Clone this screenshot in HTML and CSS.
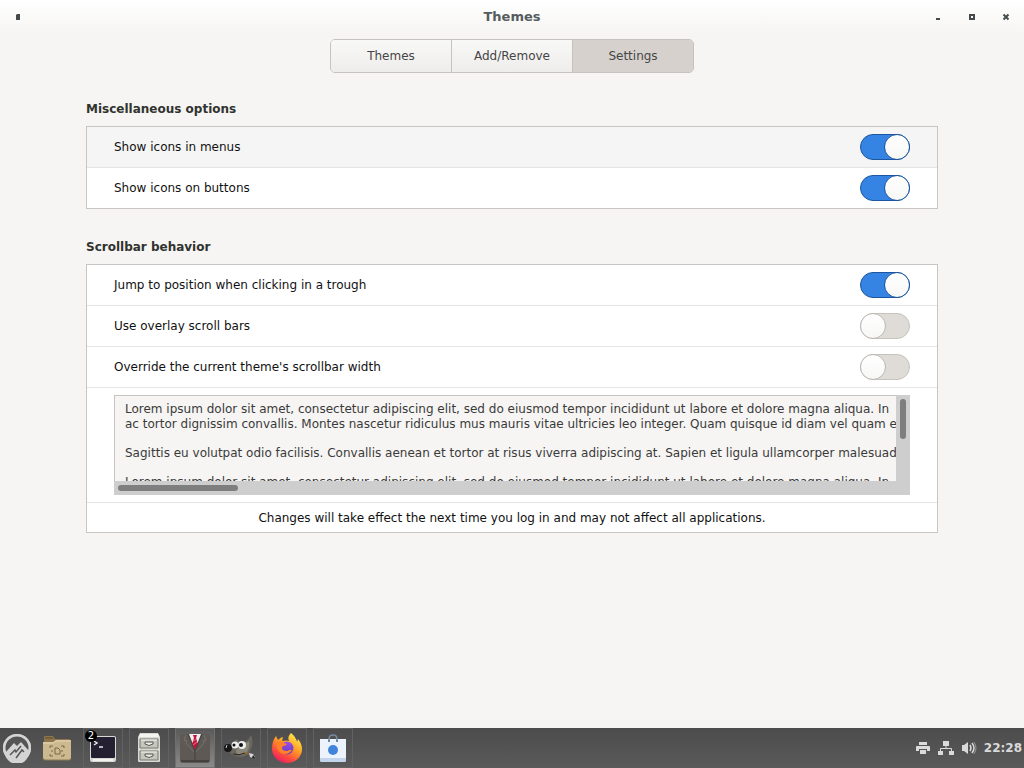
FILE: index.html
```html
<!DOCTYPE html>
<html lang="en">
<head>
<meta charset="utf-8">
<title>Themes</title>
<link rel="stylesheet" href="styles.css">
</head>
<body>
<div class="desktop">
  <header class="titlebar">
    <div class="titlebar-left">
      <button class="win-btn" type="button" aria-label="Pin window"><svg width="6" height="8" viewBox="0 0 6 8"><path d="M1 2l1-1h3v6H1z" fill="#454b4d"/></svg></button>
    </div>
    <h1 class="window-title">Themes</h1>
    <div class="titlebar-right">
      <button class="win-btn" type="button" aria-label="Minimize"><svg width="8" height="8" viewBox="0 0 8 8"><path d="M2 5h4v2H2z" fill="#454b4d"/></svg></button>
      <button class="win-btn" type="button" aria-label="Maximize"><svg width="8" height="8" viewBox="0 0 8 8"><path d="M2 2h4v4H2z" fill="none" stroke="#454b4d" stroke-width="2"/></svg></button>
      <button class="win-btn" type="button" aria-label="Close"><svg width="8" height="8" viewBox="0 0 8 8"><path d="M1.500 1.500l5 5M6.500 1.500l-5 5" stroke="#454b4d" stroke-width="2"/></svg></button>
    </div>
  </header>

  <nav class="tabs" aria-label="Pages">
    <button class="tab" type="button">Themes</button>
    <button class="tab" type="button">Add/Remove</button>
    <button class="tab tab-active" type="button" aria-current="page">Settings</button>
  </nav>

  <main class="content">
    <section class="group">
      <h2 class="group-title">Miscellaneous options</h2>
      <div class="frame">
        <label class="row row-hover"><span>Show icons in menus</span><input class="switch" type="checkbox" role="switch" checked></label>
        <label class="row"><span>Show icons on buttons</span><input class="switch" type="checkbox" role="switch" checked></label>
      </div>
    </section>
    <section class="group">
      <h2 class="group-title">Scrollbar behavior</h2>
      <div class="frame">
        <label class="row"><span>Jump to position when clicking in a trough</span><input class="switch" type="checkbox" role="switch" checked></label>
        <label class="row"><span>Use overlay scroll bars</span><input class="switch" type="checkbox" role="switch"></label>
        <label class="row"><span>Override the current theme's scrollbar width</span><input class="switch" type="checkbox" role="switch"></label>
        <div class="preview-row">
          <div class="preview">
            <div class="preview-text">
              <p>Lorem ipsum dolor sit amet, consectetur adipiscing elit, sed do eiusmod tempor incididunt ut labore et dolore magna aliqua. In<br>ac tortor dignissim convallis. Montes nascetur ridiculus mus mauris vitae ultricies leo integer. Quam quisque id diam vel quam e</p>
              <p>Sagittis eu volutpat odio facilisis. Convallis aenean et tortor at risus viverra adipiscing at. Sapien et ligula ullamcorper malesuada</p>
              <p>Lorem ipsum dolor sit amet, consectetur adipiscing elit, sed do eiusmod tempor incididunt ut labore et dolore magna aliqua. In</p>
            </div>
            <div class="bar bar-vertical"><div class="thumb thumb-vertical"></div></div>
            <div class="bar bar-horizontal"><div class="thumb thumb-horizontal"></div></div>
          </div>
        </div>
        <p class="note">Changes will take effect the next time you log in and may not affect all applications.</p>
      </div>
    </section>
  </main>

  <footer class="panel">
    <button class="launcher launcher-menu" type="button" aria-label="Menu">
      <svg width="30" height="30" viewBox="0 0 30 30"><circle cx="15" cy="15" r="14" fill="#d4d4d4"/><circle cx="15" cy="15" r="11.500" fill="#555"/><path d="M3 20L12 10l3 3 4-4 8 9a12 12 0 0 1-24 2z" fill="#d4d4d4"/><path d="M8 22l5-5 1 2 5-6M14 25l6-8 2 2" fill="none" stroke="#555" stroke-width="1.500"/><circle cx="15" cy="15" r="13" fill="none" stroke="#d4d4d4" stroke-width="2"/></svg>
    </button>
    <button class="launcher" type="button" aria-label="Files">
      <svg width="32" height="30" viewBox="0 0 32 30"><path d="M3 4q0-1 1-1h8l2 3h14q1 0 1 1v5H3z" fill="#8c754d"/><path d="M4 5h8M15 8h12" stroke="#5d4b2c"/><path d="M2 9h10l3-2h14q1 0 1 1v17q0 2-2 2H4q-2 0-2-2z" fill="#cdb98f"/><path d="M2 10h10l3-2h15" fill="none" stroke="#e5d6b3"/><path d="M2 25q0 2 2 2h24q2 0 2-2" fill="none" stroke="#8d7a55"/><path d="M9 15v-2h3M20 13h3v2M9 21v2h3M20 23h3v-2M14 15h3l2 2v4h-5zM11 17v2M21 17v2" fill="none" stroke="#796849"/></svg>
    </button>
    <div class="tasks">
      <button class="task" type="button" aria-label="Terminal, 2 windows">
        <svg width="32" height="32" viewBox="0 0 32 32"><rect x="3" y="4" width="26" height="26" rx="2" fill="#d8d8d5"/><rect x="4" y="5" width="24" height="21" rx="1" fill="#241f31"/><path d="M6 28h20" stroke="#f2f2ef" stroke-width="2"/><path d="M7 9l3 2-3 2M12 15h4" fill="none" stroke="#e8e8e8" stroke-width="1.500"/></svg>
        <span class="badge">2</span>
      </button>
      <button class="task" type="button" aria-label="File cabinet">
        <svg width="32" height="32" viewBox="0 0 32 32"><path d="M7 1h18l2 4v24q0 1-1 1H6q-1 0-1-1V5z" fill="#d9dad4"/><path d="M7 2h18l1 3H6z" fill="#f4f4ef"/><path d="M7 7h18v9H7zM7 19h18v9H7z" fill="#c5c7be" stroke="#777a70"/><path d="M8 8h16M8 20h16" stroke="#f4f4ef"/><path d="M12 10h8v2q-4 3-8 0zM12 22h8v2q-4 3-8 0z" fill="#ededE7" stroke="#55574f"/></svg>
      </button>
      <button class="task task-active" type="button" aria-label="Themes">
        <svg width="32" height="32" viewBox="0 0 32 32"><rect x="1" y="2" width="30" height="29" rx="3" fill="#5e5955"/><path d="M2 29h28" stroke="#45413e" stroke-width="2"/><path d="M10 2h12l-6 16z" fill="#f0f0f0"/><path d="M14 3h4l-1 3 2 6-3 6-3-6 2-6z" fill="#c9133e"/><path d="M14 9l4-2M14 13l4-3" stroke="#ef6c83"/><path d="M9 2l7 17 7-17M16 19v11" fill="none" stroke="#45413e"/><path d="M7 3L5 8l3 1-1 2 8 9M25 3l2 5-3 1 1 2-8 9" fill="none" stroke="#77716b"/></svg>
      </button>
      <button class="task" type="button" aria-label="GIMP">
        <svg width="34" height="32" viewBox="0 0 34 32"><path d="M4 18l6-7 2-4 5 4q6 0 10-8 3 7 0 14-3 8-11 8-8 0-12-7z" fill="#6b695f"/><path d="M12 18l13-9q1 6-2 11-3 3-8 3-3-1-3-5z" fill="#89867c"/><ellipse cx="4" cy="16" rx="4" ry="4" fill="#171717"/><path d="M2 16l1-3" stroke="#ccc"/><circle cx="11" cy="13" r="3.500" fill="#eee"/><circle cx="18" cy="13" r="4" fill="#eee"/><circle cx="10" cy="13" r="1.500" fill="#111"/><circle cx="17" cy="13" r="2" fill="#111"/><path d="M9 22q6 2 12-1" fill="none" stroke="#292923"/><path d="M19 20l8 3" stroke="#a86726"/><path d="M25 21l4 1 3 5-6-2z" fill="#d7d7d7"/><path d="M29 23l3 4-4-1z" fill="#222"/></svg>
      </button>
      <button class="task" type="button" aria-label="Firefox">
        <svg width="32" height="32" viewBox="0 0 32 32"><defs><linearGradient id="fox" x1=".8" y1="0" x2=".2" y2="1"><stop offset="0" stop-color="#fff14f"/><stop offset=".4" stop-color="#ffa126"/><stop offset=".7" stop-color="#ff503d"/><stop offset="1" stop-color="#e21568"/></linearGradient><linearGradient id="globe" x1="0" y1="0" x2="0" y2="1"><stop offset="0" stop-color="#a44bea"/><stop offset="1" stop-color="#5841bd"/></linearGradient></defs><path d="M20 1q5 4 6 9l1-3q4 5 4 10a15 14 0 0 1-30 0q0-8 4-13l2 4q3-3 5-3l-1 4q5-1 7 0-2-4 2-8z" fill="url(#fox)"/><circle cx="16" cy="16" r="6.500" fill="url(#globe)"/><path d="M6 10q4-2 7 1l3 1q-1 2-4 2-2 2 0 4 4 2 6 0l3 0q-4 6-11 3-6-4-4-11z" fill="#ff8129"/></svg>
      </button>
      <button class="task" type="button" aria-label="Software">
        <svg width="32" height="32" viewBox="0 0 32 32"><path d="M3 7h26v21q0 2-2 2H5q-2 0-2-2z" fill="#edf3fc"/><path d="M3 26h26v2q0 2-2 2H5q-2 0-2-2z" fill="#c3d5ed"/><circle cx="16" cy="18" r="5" fill="#4284dc"/><path d="M12 9V7q0-4 4-4t4 4v2" fill="none" stroke="#748da4" stroke-width="1.500"/><circle cx="12" cy="9" r="1" fill="#496e93"/><circle cx="20" cy="9" r="1" fill="#496e93"/></svg>
      </button>
    </div>
    <div class="tray">
      <svg width="16" height="16" viewBox="0 0 16 16" role="img" aria-label="Printer"><path d="M4 2h8v3H4zM2 6h12q1 0 1 1v4h-3V9H4v2H1V7q0-1 1-1zM5 10h6v4H5z" fill="#dadada"/></svg>
      <svg width="16" height="16" viewBox="0 0 16 16" role="img" aria-label="Network"><path d="M5 1h6v5H5zM0 11h5v4H0zM11 11h5v4h-5z" fill="#dadada"/><path d="M8 5v4M2.500 12V8.500h11V12" fill="none" stroke="#dadada"/></svg>
      <svg width="16" height="16" viewBox="0 0 16 16" role="img" aria-label="Volume"><path d="M1 5h2l4-3v12l-4-3H1z" fill="#dadada"/><path d="M9 5q2 3 0 6M11 3q4 5 0 10" fill="none" stroke="#dadada" stroke-width="1.500"/><path d="M13 2q4 6 0 12" fill="none" stroke="#929292"/></svg>
      <time class="clock">22:28</time>
    </div>
  </footer>
</div>
</body>
</html>
```

FILE: styles.css
```css
*, *::before { box-sizing: border-box; }
body {
  margin: 0;
  font: 12px/14px "DejaVu Sans", sans-serif;
  color: #111;
  background: #f6f5f3;
}
h1, h2, p { margin: 0; }
button { font: inherit; border: 0; padding: 0; background: none; }
svg { display: block; flex: none; }
.desktop {
  display: flex;
  flex-direction: column;
  min-height: 100vh;
}
.titlebar {
  display: grid;
  grid-template-columns: 1fr auto 1fr;
  align-items: center;
  height: 34px;
  padding: 0 1px;
  background: linear-gradient(#fff, #f6f5f3);
}
.titlebar-left, .titlebar-right { display: flex; }
.titlebar-right { justify-content: flex-end; }
.win-btn {
  display: flex;
  align-items: center;
  justify-content: center;
  width: 34px;
  height: 34px;
}
.window-title {
  font-size: 13px;
  line-height: 16px;
  font-weight: bold;
  color: #555c5e;
}
.tabs {
  display: flex;
  align-self: center;
  margin-top: 5px;
  border: 1px solid #c6c2be;
  border-radius: 5px;
  overflow: hidden;
}
.tab {
  width: 121px;
  height: 32px;
  color: #454545;
  background: linear-gradient(#f8f8f7, #eeedeb);
}
.tab:first-child { width: 120px; }
.tab + .tab { border-left: 1px solid #c6c2be; }
.tab.tab-active { background: #d7d1cd; }
.content {
  display: flex;
  flex-direction: column;
  gap: 31px;
  flex: 1;
  padding: 29px 86px;
}
.group-title {
  margin-bottom: 10px;
  font-size: 12px;
  line-height: 14px;
  color: #30332f;
}
.frame {
  background: #fff;
  border: 1px solid #c9c5c2;
}
.row {
  display: flex;
  align-items: center;
  justify-content: space-between;
  height: 41px;
  padding: 0 27px;
  border-bottom: 1px solid #e6e5e4;
}
.row:last-child { height: 40px; border-bottom: 0; }
.row-hover { background: #f5f5f6; }
.switch {
  appearance: none;
  width: 50px;
  height: 26px;
  margin: 0;
  border: 1px solid #c7c3bf;
  border-radius: 13px;
  background: #dfdcd8;
}
.switch::before {
  content: "";
  display: block;
  width: 26px;
  height: 26px;
  margin: -1px;
  border: 1px solid #bdb8b3;
  border-radius: 50%;
  background: linear-gradient(#fff, #f7f7f6);
}
.switch:checked { background: #3584e4; border-color: #1b569f; }
.switch:checked::before { margin-left: 23px; border-color: #1b569f; }
.preview-row { padding: 7px 27px; border-bottom: 1px solid #e6e5e4; }
.preview {
  display: grid;
  grid-template: 1fr 14px / minmax(0, 1fr) 14px;
  height: 100px;
}
.preview-text {
  display: flex;
  flex-direction: column;
  gap: 14px;
  padding: 6px 0 0 10px;
  overflow: hidden;
  white-space: nowrap;
  line-height: 15px;
  color: #3a3a3a;
  background: #f6f5f3;
  border: 1px solid #c6c3c0;
  border-width: 1px 0 0 1px;
}
.bar { padding: 4px; background: #cecece; }
.bar-horizontal { grid-column: 1 / -1; }
.thumb { border-radius: 3px; background: #7e7e7e; }
.thumb-vertical { width: 6px; height: 40px; }
.thumb-horizontal { width: 120px; height: 6px; }
.note { padding: 8px 27px 7px; text-align: center; }
.panel {
  display: flex;
  align-items: center;
  height: 40px;
  background: linear-gradient(#4c4c4c, #5a5a5a);
}
.launcher, .task {
  display: flex;
  align-items: center;
  justify-content: center;
  width: 40px;
  height: 40px;
}
.launcher-menu { width: 34px; margin-right: 3px; }
.tasks { display: flex; gap: 6px; margin-left: 6px; }
.task {
  position: relative;
  border: 1px solid #626262;
}
.task-active {
  border-color: #6f6f6f;
  background: linear-gradient(#5a5a5a, #8a8a8a);
}
.badge {
  position: absolute;
  top: 1px;
  left: 1px;
  width: 12px;
  height: 12px;
  border-radius: 50%;
  font-size: 10px;
  line-height: 12px;
  text-align: center;
  color: #fff;
  background: #000;
}
.tray {
  display: flex;
  align-items: center;
  gap: 7px;
  margin-left: auto;
  padding-right: 2px;
}
.clock { font-size: 12px; font-weight: bold; color: #dadada; }
```
